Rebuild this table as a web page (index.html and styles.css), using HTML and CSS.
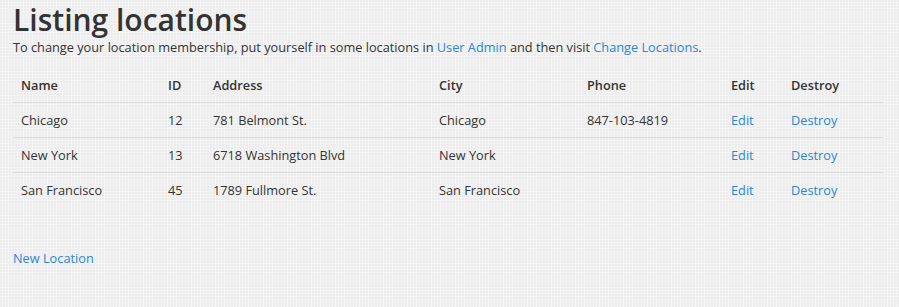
FILE: index.html
```html
<!DOCTYPE html>
<html>
<head>
<meta charset="utf-8">
<link rel="stylesheet" href="styles.css">
</head>
<body>
<div class="page">
  <h1 class="title">Listing locations</h1>
  <p class="intro">To change your location membership, put yourself in some locations in <a href="#">User Admin</a> and then visit <a href="#">Change Locations</a>.</p>
  <table class="grid">
    <colgroup>
      <col class="c-name"><col class="c-id"><col class="c-addr"><col class="c-city"><col class="c-phone"><col class="c-edit"><col class="c-destroy">
    </colgroup>
    <thead>
      <tr><th>Name</th><th>ID</th><th>Address</th><th>City</th><th>Phone</th><th>Edit</th><th>Destroy</th></tr>
    </thead>
    <tbody>
      <tr><td>Chicago</td><td>12</td><td>781 Belmont St.</td><td>Chicago</td><td>847-103-4819</td><td><a href="#">Edit</a></td><td><a href="#">Destroy</a></td></tr>
      <tr><td>New York</td><td>13</td><td>6718 Washington Blvd</td><td>New York</td><td></td><td><a href="#">Edit</a></td><td><a href="#">Destroy</a></td></tr>
      <tr><td>San Francisco</td><td>45</td><td>1789 Fullmore St.</td><td>San Francisco</td><td></td><td><a href="#">Edit</a></td><td><a href="#">Destroy</a></td></tr>
    </tbody>
  </table>
  <p class="new"><a href="#">New Location</a></p>
</div>
</body>
</html>
```
FILE: styles.css
```css
html, body {
  margin: 0;
  padding: 0;
}
body {
  background-color: #f3f3f3;
  background-image: radial-gradient(circle at 1px 1px, #ebebeb 0.7px, transparent 1.1px);
  background-size: 3px 3px;
  font-family: "Open Sans", "DejaVu Sans", sans-serif;
  font-size: 12.75px;
  line-height: 18px;
  color: #333;
  height: 307px;
}
.page {
  padding: 0 16px 0 13px;
}
a {
  color: #2a87d0;
  text-decoration: none;
}
.title {
  margin: 0;
  padding-top: 2px;
  font-size: 30px;
  line-height: 36px;
  font-weight: 600;
  color: #333;
}
.intro {
  margin: 0 0 12px;
}
.grid {
  width: 870px;
  border-collapse: collapse;
  table-layout: fixed;
}
.c-name { width: 147px; }
.c-id { width: 45px; }
.c-addr { width: 226px; }
.c-city { width: 148px; }
.c-phone { width: 144px; }
.c-edit { width: 60px; }
.c-destroy { width: 100px; }
.grid th, .grid td {
  text-align: left;
  padding: 8px;
  line-height: 18px;
  vertical-align: top;
}
.grid th {
  font-weight: 600;
}
.grid tbody td {
  border-top: 1px solid #dcdcdc;
}
.new {
  margin: 42px 0 0;
}
```
